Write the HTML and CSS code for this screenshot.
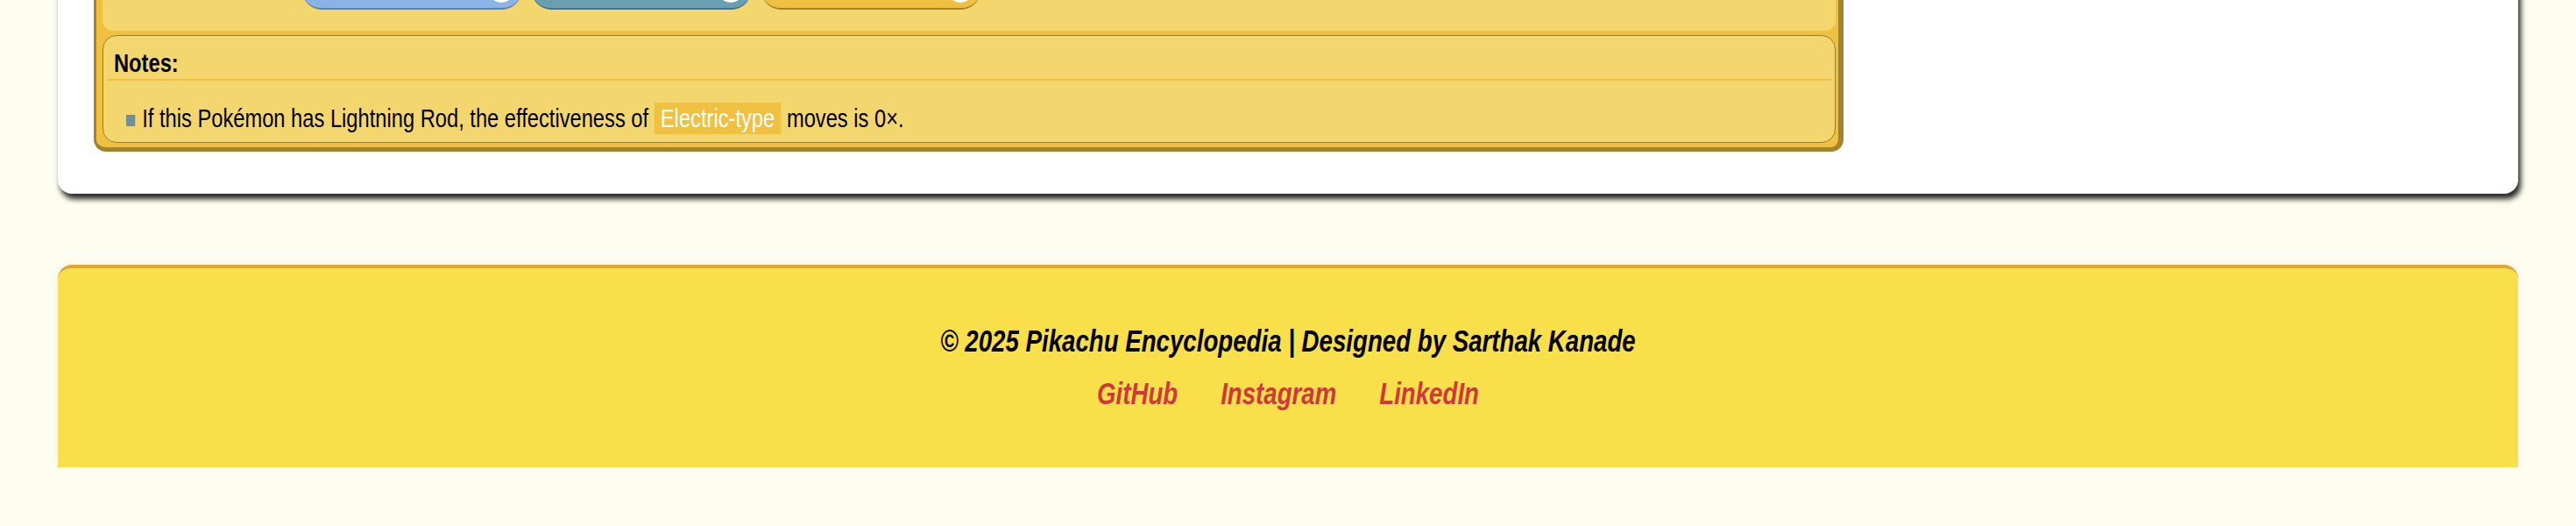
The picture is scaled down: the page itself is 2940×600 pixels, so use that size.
FILE: index.html
```html
<!DOCTYPE html>
<html lang="en">
<head>
<meta charset="utf-8">
<title>Pikachu Encyclopedia</title>
<link rel="stylesheet" href="styles.css">
</head>
<body>
<div class="page">
  <section class="card">
    <div class="panel">
      <div class="chart-upper">
        <div class="row-label"></div>
        <div class="type-row">
          <div class="type-btn type-flying"><span class="mult"></span></div>
          <div class="type-btn type-steel"><span class="mult"></span></div>
          <div class="type-btn type-electric"><span class="mult"></span></div>
        </div>
      </div>
      <div class="notes">
        <div class="notes-title">Notes:</div>
        <div class="notes-rule"></div>
        <ul class="notes-list">
          <li><span class="bullet"></span>If this Pokémon has Lightning Rod, the effectiveness of <span class="type-badge">Electric-type</span> moves is 0×.</li>
        </ul>
      </div>
    </div>
  </section>

  <footer class="footer">
    <p class="copyright">© 2025 Pikachu Encyclopedia | Designed by Sarthak Kanade</p>
    <nav class="links">
      <a href="#">GitHub</a>
      <a href="#">Instagram</a>
      <a href="#">LinkedIn</a>
    </nav>
  </footer>
</div>
</body>
</html>
```

FILE: styles.css
```css
* { box-sizing: border-box; }

html, body { margin: 0; padding: 0; }

body {
  background: #fdfdf0;
  font-family: "Liberation Sans", Arial, Helvetica, sans-serif;
  color: #000;
}

.page {
  padding: 0 66px;
}

.card {
  margin-top: -81px;
  padding: 24px 0 48px 41px;
  background: #ffffff;
  border-radius: 0 0 16px 16px;
  box-shadow: 3px 6px 6px rgba(0, 0, 0, 0.85);
}

.panel {
  width: 1997px;
  background: #f0c040;
  border-style: solid;
  border-color: #a3842a;
  border-width: 0 6px 5px 3px;
  border-radius: 0 0 14px 14px;
  padding: 0 3px 5px 7px;
}

.chart-upper {
  display: flex;
  align-items: center;
  background: #f4d66e;
  border-radius: 0 0 12px 12px;
  padding: 24px 0;
}

.row-label {
  width: 228px;
  flex: none;
}

.type-row {
  display: flex;
  gap: 12px;
}

.type-btn {
  width: 250px;
  height: 44px;
  border-radius: 22px;
  border-bottom: 2px solid;
  display: flex;
  align-items: center;
  justify-content: flex-end;
  padding: 0 8px 0 20px;
}

.mult {
  width: 30px;
  height: 30px;
  border-radius: 50%;
  background: #fff;
}

.type-flying { background: #8ab4e8; border-color: #5f7fa8; }
.type-steel { background: #6a9fb3; border-color: #4b7282; }
.type-electric { background: #f0c040; border-color: #a3842a; }

.notes {
  margin-top: 5px;
  background: #f4d66e;
  border: 1px solid #9c7f2c;
  border-radius: 16px;
  padding: 13px 4px 9px;
}

.notes-title {
  margin-left: 8px;
  font-weight: bold;
  font-size: 30px;
  line-height: 36px;
  transform: scaleX(0.79);
  transform-origin: left center;
}

.notes-rule {
  height: 2px;
  background: #f0c040;
}

.notes-list {
  list-style: none;
  margin: 0;
  padding: 25px 0 0 22px;
  font-size: 30px;
  line-height: 36px;
}

.notes-list li {
  transform: scaleX(0.79);
  transform-origin: left center;
}

.bullet {
  display: inline-block;
  width: 13px;
  height: 13px;
  margin-right: 10px;
  background: #6f8fa3;
  vertical-align: middle;
}

.type-badge {
  display: inline-block;
  background: #f0c040;
  color: #fff;
  padding: 0 9px;
}

.footer {
  margin-top: 81px;
  background: #f9df4a;
  border-top: 4px solid #e0a535;
  border-radius: 16px 16px 0 0;
  padding: 63px 0 64px;
  text-align: center;
  font-weight: bold;
  font-style: italic;
  font-size: 35px;
  line-height: 40px;
  box-shadow: 0 0 12px rgba(0, 0, 0, 0.06);
}

.copyright {
  margin: 0;
  color: #000;
  transform: scaleX(0.79);
}

.links {
  margin-top: 20px;
  display: flex;
  justify-content: center;
  gap: 62px;
  transform: scaleX(0.79);
}

.links a {
  color: #d0393b;
  text-decoration: none;
}
```
